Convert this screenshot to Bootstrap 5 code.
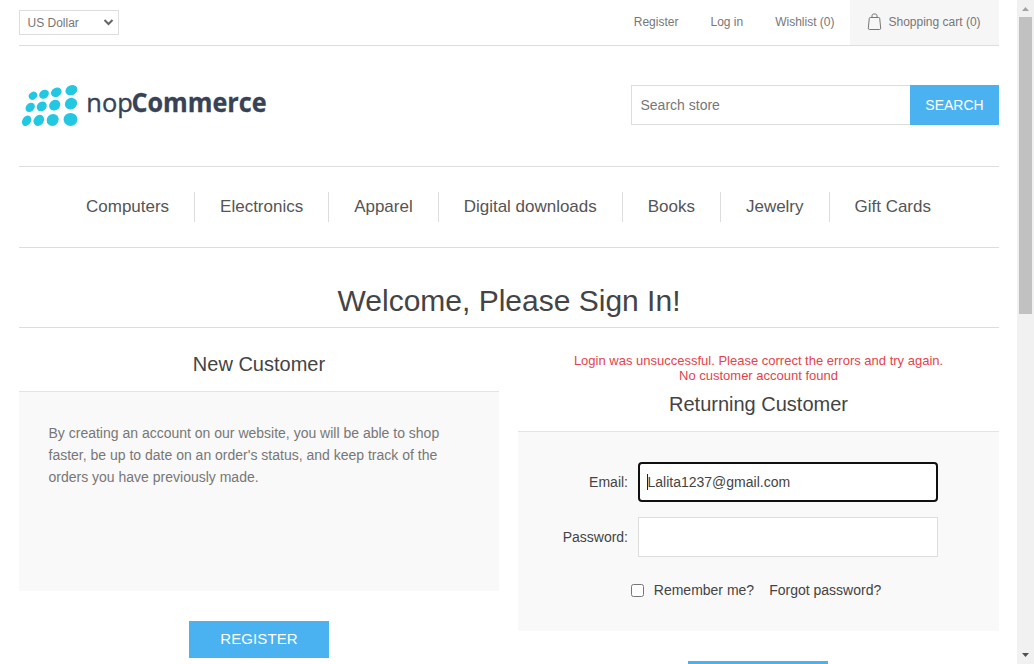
<!DOCTYPE html>
<html lang="en">
<head>
<meta charset="utf-8">
<meta name="viewport" content="width=device-width, initial-scale=1">
<title>nopCommerce demo store. Login</title>
<link href="https://cdn.jsdelivr.net/npm/bootstrap@5.3.0/dist/css/bootstrap.min.css" rel="stylesheet">
<style>
body{font-family:"Liberation Sans",Arial,sans-serif;font-size:14px;line-height:22px;color:#777;height:664px;overflow:hidden}
a{color:inherit;text-decoration:none}
h1,h2{font-weight:400;color:#444;margin:0}
.page-wrap{width:980px;height:664px;overflow:hidden;margin:0 18px 0 19px}
.line-b{border-bottom:1px solid #ddd}
.topbar{height:46px;font-size:12px}
.currency{width:100px;height:25px;margin-top:10px;border:1px solid #ddd;padding:0 4px 0 7.5px}
.toplinks{height:45px;gap:32px;padding-bottom:1px}
.cart-link{background:#f6f6f6;width:149px;height:45px;margin:0 0 -1px -16.500px;padding:0 0 2px 17px;gap:6.5px}
.masthead{height:121px;padding-top:39px}
.site-logo{overflow:visible}
.search-box{width:368px;height:40px}
.search-box input{border:1px solid #ddd;border-right:0;border-radius:0;padding:0 8.5px;font-size:14px;color:#777;box-shadow:none}
.search-box input::placeholder{color:#777;opacity:1}
.btn-blue,.btn-blue:hover{background:#4ab2f1;color:#fff;border:0;border-radius:0;padding:0;font-size:14px}
.search-btn{width:89px}
.main-menu{height:81px;font-size:17px;color:#555;padding-right:1px}
.main-menu a{padding:0 25px;height:30px;line-height:29px;border-left:1px solid #ddd;white-space:nowrap;letter-spacing:-.01px}
.main-menu a:first-child{border-left:0}
.page-title{height:80px;padding-top:34px}
.page-title h1{font-size:30px;line-height:38px}
.panel-col{width:480px;padding-top:24px}
.panel-col.returning{width:481px;padding-top:25px}
.panel-col h2{font-size:20px;line-height:24px;height:39px}
.returning h2{margin-top:9px}
.panel-body{background:#f9f9f9;border-top:1px solid #e4e4e4;height:200px;padding:30px 29px}
.intro{padding-left:29.5px}
.btn-row{padding-top:30px}
.btn.big-btn{width:140px;height:37px;font-size:15px;letter-spacing:.1px}
.error-text{color:#e4434b;font-size:13px;line-height:15px}
.field-row{gap:10px;color:#444;height:40px}
.field-row+.field-row{margin-top:15px}
.field-row label{width:81px;text-align:right}
.field-row input{width:300px;height:40px;border:1px solid #ddd;border-radius:0;padding:0 8px;font-size:14px;color:#444;box-shadow:none!important}
.field-row .focused,.field-row .focused:focus{border:2px solid #101010;border-radius:4px;padding-left:7.5px;color:#444}
.caret{left:9px;top:12px;width:1px;height:16px;background:#222}
.options{color:#444;margin-top:22px;padding-right:5px}
.options a{margin-left:15px}
.check{appearance:none;width:13px;height:13px;border:1px solid #767676;border-radius:2.5px;background:#fff;margin:1px 10px 0 0}
.scroll-track{width:17px;height:664px;background:#f1f1f1}
.scroll-thumb{width:13px;height:297px;background:#c1c1c1}
</style>
</head>
<body class="d-flex bg-white">
<div class="page-wrap flex-shrink-0">
  <div class="topbar line-b d-flex justify-content-between">
    <div class="currency d-flex align-items-center justify-content-between"><span>US Dollar</span>
      <svg width="11" height="7" viewBox="0 0 11 7"><path d="M1.5 1 5.5 5l4-4" fill="none" stroke="#666" stroke-width="2"/></svg></div>
    <nav class="toplinks d-flex align-items-center">
      <a href="#">Register</a><a href="#">Log in</a><a href="#">Wishlist (0)</a>
      <a href="#" class="cart-link d-flex align-items-center">
        <svg width="15" height="18" viewBox="0 0 15 18"><path d="M3.200 4.500h8.600c.5 0 .8.3.9.8l1 9.800c.1.800-.3 1.400-1 1.400H2.300c-.7 0-1.100-.6-1-1.400l1-9.800c.1-.5.4-.8.9-.8ZM5 4.500V3c0-1.300.6-2 1.500-2h2C9.400 1 10 1.700 10 3v1.500" fill="none" stroke="#777"/></svg>
        <span>Shopping cart (0)</span></a>
    </nav>
  </div>
  <header class="masthead line-b d-flex justify-content-between align-items-start">
    <svg class="site-logo" width="250" height="50" viewBox="19 85 250 50" role="img" aria-label="nopCommerce">
      <g fill="#22c8e2">
        <ellipse cx="33" cy="95.700" rx="4.500" ry="3.700" transform="rotate(-35 33 95.700)"/>
        <ellipse cx="44" cy="94.200" rx="5.200" ry="4.200" transform="rotate(-35 44 94.200)"/>
        <ellipse cx="56.300" cy="92.300" rx="5.600" ry="4.500" transform="rotate(-30 56.300 92.300)"/>
        <ellipse cx="71.400" cy="90.200" rx="6.200" ry="4.900" transform="rotate(-25 71.400 90.200)"/>
        <ellipse cx="30.200" cy="107.400" rx="5.200" ry="4.100" transform="rotate(-45 30.200 107.400)"/>
        <ellipse cx="41.700" cy="106.400" rx="5.400" ry="4.500" transform="rotate(-42 41.700 106.400)"/>
        <ellipse cx="54.700" cy="105.200" rx="5.900" ry="5.100" transform="rotate(-38 54.700 105.200)"/>
        <ellipse cx="71" cy="103.600" rx="6.300" ry="5.600" transform="rotate(-30 71 103.600)"/>
        <ellipse cx="26.600" cy="120.800" rx="5.600" ry="4.200" transform="rotate(-55 26.600 120.800)"/>
        <ellipse cx="38.800" cy="120.400" rx="5.900" ry="4.900" transform="rotate(-52 38.800 120.400)"/>
        <ellipse cx="52.700" cy="119.900" rx="6.300" ry="5.700" transform="rotate(-45 52.700 119.900)"/>
        <ellipse cx="70.500" cy="119.400" rx="6.900" ry="6.500"/>
      </g>
      <g fill="#384255" font-family="'Open Sans','Noto Sans',sans-serif" font-size="26">
        <text x="86.300" y="112.300" textLength="46.500" lengthAdjust="spacingAndGlyphs" stroke="#384255" stroke-width=".4">nop</text>
        <text x="131.500" y="112.300" font-weight="700" textLength="135" lengthAdjust="spacingAndGlyphs" stroke="#384255" stroke-width=".3">Commerce</text>
      </g>
    </svg>
    <form class="search-box d-flex">
      <input class="form-control" type="text" placeholder="Search store" aria-label="Search store">
      <button class="btn btn-blue search-btn flex-shrink-0" type="button">SEARCH</button>
    </form>
  </header>
  <nav class="main-menu line-b d-flex justify-content-center align-items-center">
    <a href="#">Computers</a><a href="#">Electronics</a><a href="#">Apparel</a><a href="#">Digital downloads</a><a href="#">Books</a><a href="#">Jewelry</a><a href="#">Gift Cards</a>
  </nav>
  <div class="page-title line-b text-center"><h1>Welcome, Please Sign In!</h1></div>
  <main class="d-flex justify-content-between">
    <section class="panel-col">
      <h2 class="text-center">New Customer</h2>
      <div class="panel-body intro">By creating an account on our website, you will be able to shop<br>faster, be up to date on an order's status, and keep track of the<br>orders you have previously made.</div>
      <div class="btn-row d-flex justify-content-center"><button class="btn btn-blue big-btn" type="button">REGISTER</button></div>
    </section>
    <section class="panel-col returning">
      <div class="error-text text-center">Login was unsuccessful. Please correct the errors and try again.<br>No customer account found</div>
      <h2 class="text-center">Returning Customer</h2>
      <div class="panel-body">
        <div class="field-row d-flex align-items-center"><label for="email">Email:</label>
          <div class="position-relative"><input id="email" class="form-control focused" type="text" value="Lalita1237@gmail.com"><span class="caret position-absolute"></span></div></div>
        <div class="field-row d-flex align-items-center"><label for="password">Password:</label>
          <input id="password" class="form-control" type="password"></div>
        <div class="options d-flex align-items-center justify-content-center">
          <input class="check" type="checkbox" id="remember"><label for="remember">Remember me?</label><a href="#">Forgot password?</a></div>
      </div>
      <div class="btn-row d-flex"><button class="btn btn-blue big-btn" style="margin-left:170px" type="button" aria-label="Log in"></button></div>
    </section>
  </main>
</div>
<div class="scroll-track flex-shrink-0 d-flex flex-column align-items-center">
  <svg width="17" height="17" viewBox="0 0 17 17"><path d="M5 11h7L8.500 7Z" fill="#a3a3a3"/></svg>
  <div class="scroll-thumb"></div>
  <svg class="mt-auto" width="17" height="17" viewBox="0 0 17 17"><path d="M5 6h7l-3.500 4Z" fill="#505050"/></svg>
</div>
<script src="https://cdn.jsdelivr.net/npm/bootstrap@5.3.0/dist/js/bootstrap.bundle.min.js"></script>
</body>
</html>
